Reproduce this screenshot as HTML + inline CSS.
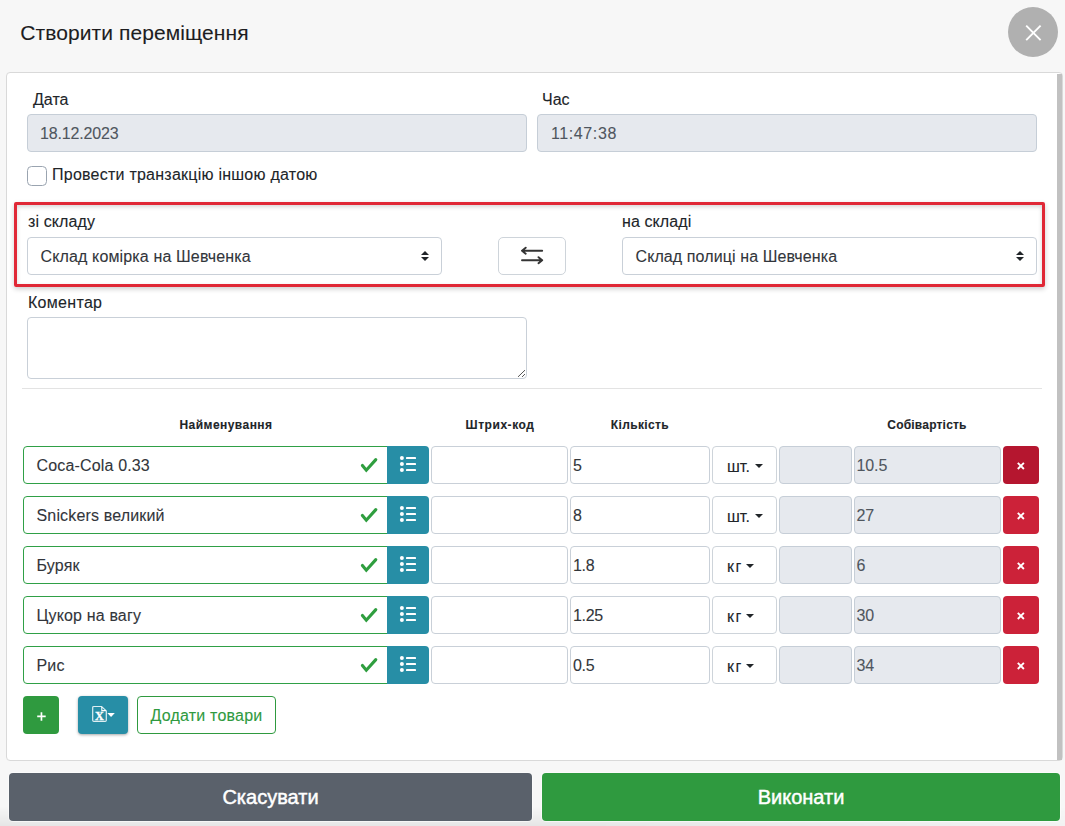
<!DOCTYPE html>
<html lang="uk">
<head>
<meta charset="utf-8">
<title>Створити переміщення</title>
<style>
*{box-sizing:border-box;margin:0;padding:0}
html,body{width:1065px;height:826px;overflow:hidden}
body{position:relative;background:#f7f7f7;font-family:"Liberation Sans",sans-serif;font-size:16px;color:#212529;-webkit-text-stroke:.1px}
.abs{position:absolute}
.t{position:absolute;white-space:nowrap;line-height:1}
.title{left:20.3px;top:21.5px;font-size:21px;color:#1d1d1f;letter-spacing:.08px}
.close{left:1008px;top:7px;width:50px;height:50px;border-radius:50%;background:#b0b0b0}
.card{left:6px;top:72px;width:1057px;height:689px;background:#fff;border:1px solid #d9d9d9;border-radius:4px}
.scroll{left:1057px;top:74px;width:5px;height:686px;background:#c1c1c1}
.lbl{font-size:16px;color:#212529}
.inp{position:absolute;height:38px;border:1px solid #c9d0d8;border-radius:4px;background:#fff;font-size:16px;color:#4f565e;line-height:36px;padding-left:2px;padding-top:1px;white-space:nowrap;overflow:hidden}
.dis{background:#e6e9ee;border-color:#c6ced7}
.ok{border-color:#2fa046;border-radius:4px 0 0 4px;color:#32363b;padding-left:12.5px;letter-spacing:.16px}
.teal{position:absolute;width:42px;height:38px;background:#278ea6;border-radius:0 4px 4px 0}
.unit{position:absolute;left:712px;width:65px;height:38px;border:1px solid #ced4da;border-radius:4px;background:#fff;font-size:16px;color:#212529;line-height:36px;padding-left:14px;padding-top:2px;white-space:nowrap}
.caret{display:inline-block;width:0;height:0;border-left:4px solid transparent;border-right:4px solid transparent;border-top:4px solid #212529;vertical-align:4px;margin-left:5px}
.del{position:absolute;left:1003px;width:36px;height:38px;border-radius:4px;background:#cc2239}
.th{font-size:12px;font-weight:bold;color:#212529;text-align:center}
.redbox{left:14px;top:202px;width:1031px;height:85px;border:3px solid #e02836;border-radius:2px;box-shadow:0 2px 5px rgba(0,0,0,.2),inset 0 2px 4px rgba(0,0,0,.16)}
.hr{left:22px;top:388px;width:1020px;height:1px;background:#e3e3e3}
.big{height:48px;font-size:20px;line-height:48px;-webkit-text-stroke:.45px #fff;box-shadow:0 0 0 1px rgba(255,255,255,.55)}
.botgrad{left:0;top:806px;width:1065px;height:20px;background:linear-gradient(to bottom,rgba(0,0,0,0),rgba(0,0,0,.065));-webkit-mask-image:linear-gradient(to right,#000 0,#000 55%,rgba(0,0,0,.3) 100%);mask-image:linear-gradient(to right,#000 0,#000 55%,rgba(0,0,0,.3) 100%)}
.btn{position:absolute;border-radius:4px;color:#fff;text-align:center;white-space:nowrap}
</style>
</head>
<body>
<div class="t title">Створити переміщення</div>
<div class="abs close"><svg width="50" height="50" viewBox="0 0 50 50"><path d="M18.2 18.7 L32.6 33.1 M32.6 18.7 L18.2 33.1" stroke="#fff" stroke-width="1.9" fill="none"/></svg></div>

<div class="abs card"></div>
<div class="abs scroll"></div>

<div class="t lbl" style="left:33px;top:92px">Дата</div>
<div class="t lbl" style="left:542px;top:92px">Час</div>
<div class="inp dis" style="left:27px;top:114px;width:500px;padding-left:12px;letter-spacing:-.15px">18.12.2023</div>
<div class="inp dis" style="left:537px;top:114px;width:500px;padding-left:13px;letter-spacing:.6px">11:47:38</div>

<div class="abs" style="left:27px;top:166px;width:20px;height:20px;border:1px solid #9aa4b0;border-radius:4.5px;background:#fff"></div>
<div class="t lbl" style="left:52px;top:167px;letter-spacing:.24px">Провести транзакцію іншою датою</div>

<div class="abs redbox"></div>
<div class="t lbl" style="left:28px;top:214px;letter-spacing:.1px">зі складу</div>
<div class="t lbl" style="left:622px;top:214px;letter-spacing:.1px">на складі</div>
<div class="inp" style="left:27px;top:237px;width:415px;padding-left:12.5px;letter-spacing:.14px;color:#32363b">Склад комірка на Шевченка</div>
<svg class="abs" style="left:421px;top:251px" width="8" height="10" viewBox="0 0 8 10"><path d="M0 4 L4 0 L8 4 Z M0 6 L8 6 L4 10 Z" fill="#212529"/></svg>
<div class="abs" style="left:498px;top:237px;width:68px;height:38px;border:1px solid #ced4da;border-radius:5px;background:#fff"></div>
<svg class="abs" style="left:518px;top:244px" width="28" height="24" viewBox="0 0 28 24"><path d="M4 6.7 H24.2 M7.7 3.7 L4 6.7 L7.7 9.7 M4 16.2 H24.2 M20.5 13.2 L24.2 16.2 L20.5 19.2" stroke="#343434" stroke-width="1.9" fill="none" stroke-linecap="round" stroke-linejoin="round"/></svg>
<div class="inp" style="left:622px;top:237px;width:415px;padding-left:12.5px;letter-spacing:.1px;color:#32363b">Склад полиці на Шевченка</div>
<svg class="abs" style="left:1016px;top:251px" width="8" height="10" viewBox="0 0 8 10"><path d="M0 4 L4 0 L8 4 Z M0 6 L8 6 L4 10 Z" fill="#212529"/></svg>

<div class="t lbl" style="left:28px;top:295px;letter-spacing:.3px">Коментар</div>
<div class="inp" style="left:27px;top:317px;width:500px;height:62px"></div>
<svg class="abs" style="left:516px;top:368px" width="9" height="9" viewBox="0 0 9 9"><path d="M2.2 8.7 L8.8 2.3 M6.3 8.7 L8.8 6.2" stroke="#555" stroke-width="1" fill="none" stroke-linecap="round"/></svg>
<div class="abs hr"></div>

<div class="t th" style="left:126px;top:419px;width:200px;letter-spacing:.45px">Найменування</div>
<div class="t th" style="left:400px;top:419px;width:200px;letter-spacing:.55px">Штрих-код</div>
<div class="t th" style="left:540px;top:419px;width:200px;letter-spacing:.37px">Кількість</div>
<div class="t th" style="left:827px;top:419px;width:200px;letter-spacing:.2px">Собівартість</div>

<!--ROWS_BEGIN-->
<div class="inp ok" style="left:23px;top:446px;width:365px">Coca-Cola 0.33</div>
<svg class="abs" style="left:359px;top:456px" width="20" height="18" viewBox="0 0 20 18"><path d="M3.4 9.4 L7.3 14.2 L16.8 3.6" stroke="#2f9e3f" stroke-width="3.1" fill="none" stroke-linecap="round" stroke-linejoin="miter"/></svg>
<div class="teal" style="left:387px;top:446px"></div>
<svg class="abs" style="left:399px;top:456px" width="18" height="17" viewBox="0 0 18 17"><g fill="#fff"><circle cx="2.9" cy="2" r="2"/><circle cx="2.9" cy="8" r="2"/><circle cx="2.9" cy="14" r="2"/><rect x="7" y="0.9" width="10" height="2.2" rx=".7"/><rect x="7" y="6.9" width="10" height="2.2" rx=".7"/><rect x="7" y="12.9" width="10" height="2.2" rx=".7"/></g></svg>
<div class="inp" style="left:431px;top:446px;width:137px"></div>
<div class="inp" style="left:570px;top:446px;width:140px;color:#32363b;letter-spacing:-.3px">5</div>
<div class="unit" style="top:446px"><span style="letter-spacing:0">шт.</span><span class="caret" style="margin-left:5px"></span></div>
<div class="inp dis" style="left:779px;top:446px;width:73px"></div>
<div class="inp dis" style="left:854px;top:446px;width:147px;padding-left:1.5px;letter-spacing:-.12px">10.5</div>
<div class="del" style="top:446px;background:#b5162f"></div>
<svg class="abs" style="left:1017px;top:462px" width="8" height="8" viewBox="0 0 8 8"><path d="M0.8 0.9 L6.9 7 M6.9 0.9 L0.8 7" stroke="#fff" stroke-width="1.9"/></svg>
<div class="inp ok" style="left:23px;top:496px;width:365px">Snickers великий</div>
<svg class="abs" style="left:359px;top:506px" width="20" height="18" viewBox="0 0 20 18"><path d="M3.4 9.4 L7.3 14.2 L16.8 3.6" stroke="#2f9e3f" stroke-width="3.1" fill="none" stroke-linecap="round" stroke-linejoin="miter"/></svg>
<div class="teal" style="left:387px;top:496px"></div>
<svg class="abs" style="left:399px;top:506px" width="18" height="17" viewBox="0 0 18 17"><g fill="#fff"><circle cx="2.9" cy="2" r="2"/><circle cx="2.9" cy="8" r="2"/><circle cx="2.9" cy="14" r="2"/><rect x="7" y="0.9" width="10" height="2.2" rx=".7"/><rect x="7" y="6.9" width="10" height="2.2" rx=".7"/><rect x="7" y="12.9" width="10" height="2.2" rx=".7"/></g></svg>
<div class="inp" style="left:431px;top:496px;width:137px"></div>
<div class="inp" style="left:570px;top:496px;width:140px;color:#32363b;letter-spacing:-.3px">8</div>
<div class="unit" style="top:496px"><span style="letter-spacing:0">шт.</span><span class="caret" style="margin-left:5px"></span></div>
<div class="inp dis" style="left:779px;top:496px;width:73px"></div>
<div class="inp dis" style="left:854px;top:496px;width:147px;padding-left:1.5px;letter-spacing:-.12px">27</div>
<div class="del" style="top:496px;background:#cc2239"></div>
<svg class="abs" style="left:1017px;top:512px" width="8" height="8" viewBox="0 0 8 8"><path d="M0.8 0.9 L6.9 7 M6.9 0.9 L0.8 7" stroke="#fff" stroke-width="1.9"/></svg>
<div class="inp ok" style="left:23px;top:546px;width:365px">Буряк</div>
<svg class="abs" style="left:359px;top:556px" width="20" height="18" viewBox="0 0 20 18"><path d="M3.4 9.4 L7.3 14.2 L16.8 3.6" stroke="#2f9e3f" stroke-width="3.1" fill="none" stroke-linecap="round" stroke-linejoin="miter"/></svg>
<div class="teal" style="left:387px;top:546px"></div>
<svg class="abs" style="left:399px;top:556px" width="18" height="17" viewBox="0 0 18 17"><g fill="#fff"><circle cx="2.9" cy="2" r="2"/><circle cx="2.9" cy="8" r="2"/><circle cx="2.9" cy="14" r="2"/><rect x="7" y="0.9" width="10" height="2.2" rx=".7"/><rect x="7" y="6.9" width="10" height="2.2" rx=".7"/><rect x="7" y="12.9" width="10" height="2.2" rx=".7"/></g></svg>
<div class="inp" style="left:431px;top:546px;width:137px"></div>
<div class="inp" style="left:570px;top:546px;width:140px;color:#32363b;letter-spacing:-.3px">1.8</div>
<div class="unit" style="top:546px"><span style="letter-spacing:1.6px">кг</span><span class="caret" style="margin-left:2.8px"></span></div>
<div class="inp dis" style="left:779px;top:546px;width:73px"></div>
<div class="inp dis" style="left:854px;top:546px;width:147px;padding-left:1.5px;letter-spacing:-.12px">6</div>
<div class="del" style="top:546px;background:#cc2239"></div>
<svg class="abs" style="left:1017px;top:562px" width="8" height="8" viewBox="0 0 8 8"><path d="M0.8 0.9 L6.9 7 M6.9 0.9 L0.8 7" stroke="#fff" stroke-width="1.9"/></svg>
<div class="inp ok" style="left:23px;top:596px;width:365px">Цукор на вагу</div>
<svg class="abs" style="left:359px;top:606px" width="20" height="18" viewBox="0 0 20 18"><path d="M3.4 9.4 L7.3 14.2 L16.8 3.6" stroke="#2f9e3f" stroke-width="3.1" fill="none" stroke-linecap="round" stroke-linejoin="miter"/></svg>
<div class="teal" style="left:387px;top:596px"></div>
<svg class="abs" style="left:399px;top:606px" width="18" height="17" viewBox="0 0 18 17"><g fill="#fff"><circle cx="2.9" cy="2" r="2"/><circle cx="2.9" cy="8" r="2"/><circle cx="2.9" cy="14" r="2"/><rect x="7" y="0.9" width="10" height="2.2" rx=".7"/><rect x="7" y="6.9" width="10" height="2.2" rx=".7"/><rect x="7" y="12.9" width="10" height="2.2" rx=".7"/></g></svg>
<div class="inp" style="left:431px;top:596px;width:137px"></div>
<div class="inp" style="left:570px;top:596px;width:140px;color:#32363b;letter-spacing:-.3px">1.25</div>
<div class="unit" style="top:596px"><span style="letter-spacing:1.6px">кг</span><span class="caret" style="margin-left:2.8px"></span></div>
<div class="inp dis" style="left:779px;top:596px;width:73px"></div>
<div class="inp dis" style="left:854px;top:596px;width:147px;padding-left:1.5px;letter-spacing:-.12px">30</div>
<div class="del" style="top:596px;background:#cc2239"></div>
<svg class="abs" style="left:1017px;top:612px" width="8" height="8" viewBox="0 0 8 8"><path d="M0.8 0.9 L6.9 7 M6.9 0.9 L0.8 7" stroke="#fff" stroke-width="1.9"/></svg>
<div class="inp ok" style="left:23px;top:646px;width:365px">Рис</div>
<svg class="abs" style="left:359px;top:656px" width="20" height="18" viewBox="0 0 20 18"><path d="M3.4 9.4 L7.3 14.2 L16.8 3.6" stroke="#2f9e3f" stroke-width="3.1" fill="none" stroke-linecap="round" stroke-linejoin="miter"/></svg>
<div class="teal" style="left:387px;top:646px"></div>
<svg class="abs" style="left:399px;top:656px" width="18" height="17" viewBox="0 0 18 17"><g fill="#fff"><circle cx="2.9" cy="2" r="2"/><circle cx="2.9" cy="8" r="2"/><circle cx="2.9" cy="14" r="2"/><rect x="7" y="0.9" width="10" height="2.2" rx=".7"/><rect x="7" y="6.9" width="10" height="2.2" rx=".7"/><rect x="7" y="12.9" width="10" height="2.2" rx=".7"/></g></svg>
<div class="inp" style="left:431px;top:646px;width:137px"></div>
<div class="inp" style="left:570px;top:646px;width:140px;color:#32363b;letter-spacing:-.3px">0.5</div>
<div class="unit" style="top:646px"><span style="letter-spacing:1.6px">кг</span><span class="caret" style="margin-left:2.8px"></span></div>
<div class="inp dis" style="left:779px;top:646px;width:73px"></div>
<div class="inp dis" style="left:854px;top:646px;width:147px;padding-left:1.5px;letter-spacing:-.12px">34</div>
<div class="del" style="top:646px;background:#cc2239"></div>
<svg class="abs" style="left:1017px;top:662px" width="8" height="8" viewBox="0 0 8 8"><path d="M0.8 0.9 L6.9 7 M6.9 0.9 L0.8 7" stroke="#fff" stroke-width="1.9"/></svg>
<!--ROWS_END-->

<div class="btn" style="left:23px;top:696px;width:36px;height:38px;background:#2f9a3f"></div>
<svg class="abs" style="left:37px;top:712px" width="9" height="9" viewBox="0 0 9 9"><path d="M4.45 0.2 V8.7 M0.2 4.45 H8.7" stroke="#fff" stroke-width="1.7"/></svg>
<div class="btn" style="left:78px;top:696px;width:50px;height:38px;background:#278ea6;box-shadow:0 1px 3px rgba(0,0,0,.35)"></div>
<svg class="abs" style="left:90px;top:703px" width="28" height="22" viewBox="0 0 28 22"><path d="M3.9 3.5 H11.6 L16.3 7.9 V17.3 Q16.3 18.4 15.2 18.4 H3.9 Q2.7 18.4 2.7 17.3 V4.6 Q2.7 3.5 3.9 3.5 Z" stroke="#fff" stroke-opacity=".85" stroke-width="1.2" fill="none"/><path d="M11.8 3.9 V7.6 H15.9" stroke="#fff" stroke-width="1.1" fill="none"/><text x="9.5" y="16.9" font-family="Liberation Serif,serif" font-size="12.2" font-weight="bold" fill="#fff" stroke="#fff" stroke-width=".35" text-anchor="middle">X</text><path d="M17.3 9.9 H24.8 L21.05 14 Z" fill="#fff"/></svg>
<div class="btn" style="left:137px;top:696px;width:139px;height:38px;border:1px solid #2f9a3f;background:#fff;color:#2f9a3f;font-size:16px;line-height:37px;letter-spacing:.2px">Додати товари</div>

<div class="abs botgrad"></div>
<div class="btn big" style="left:9px;top:773px;width:523px;background:#5a616b">Скасувати</div>
<div class="btn big" style="left:542px;top:773px;width:518px;background:#2f9a3f">Виконати</div>
</body>
</html>
